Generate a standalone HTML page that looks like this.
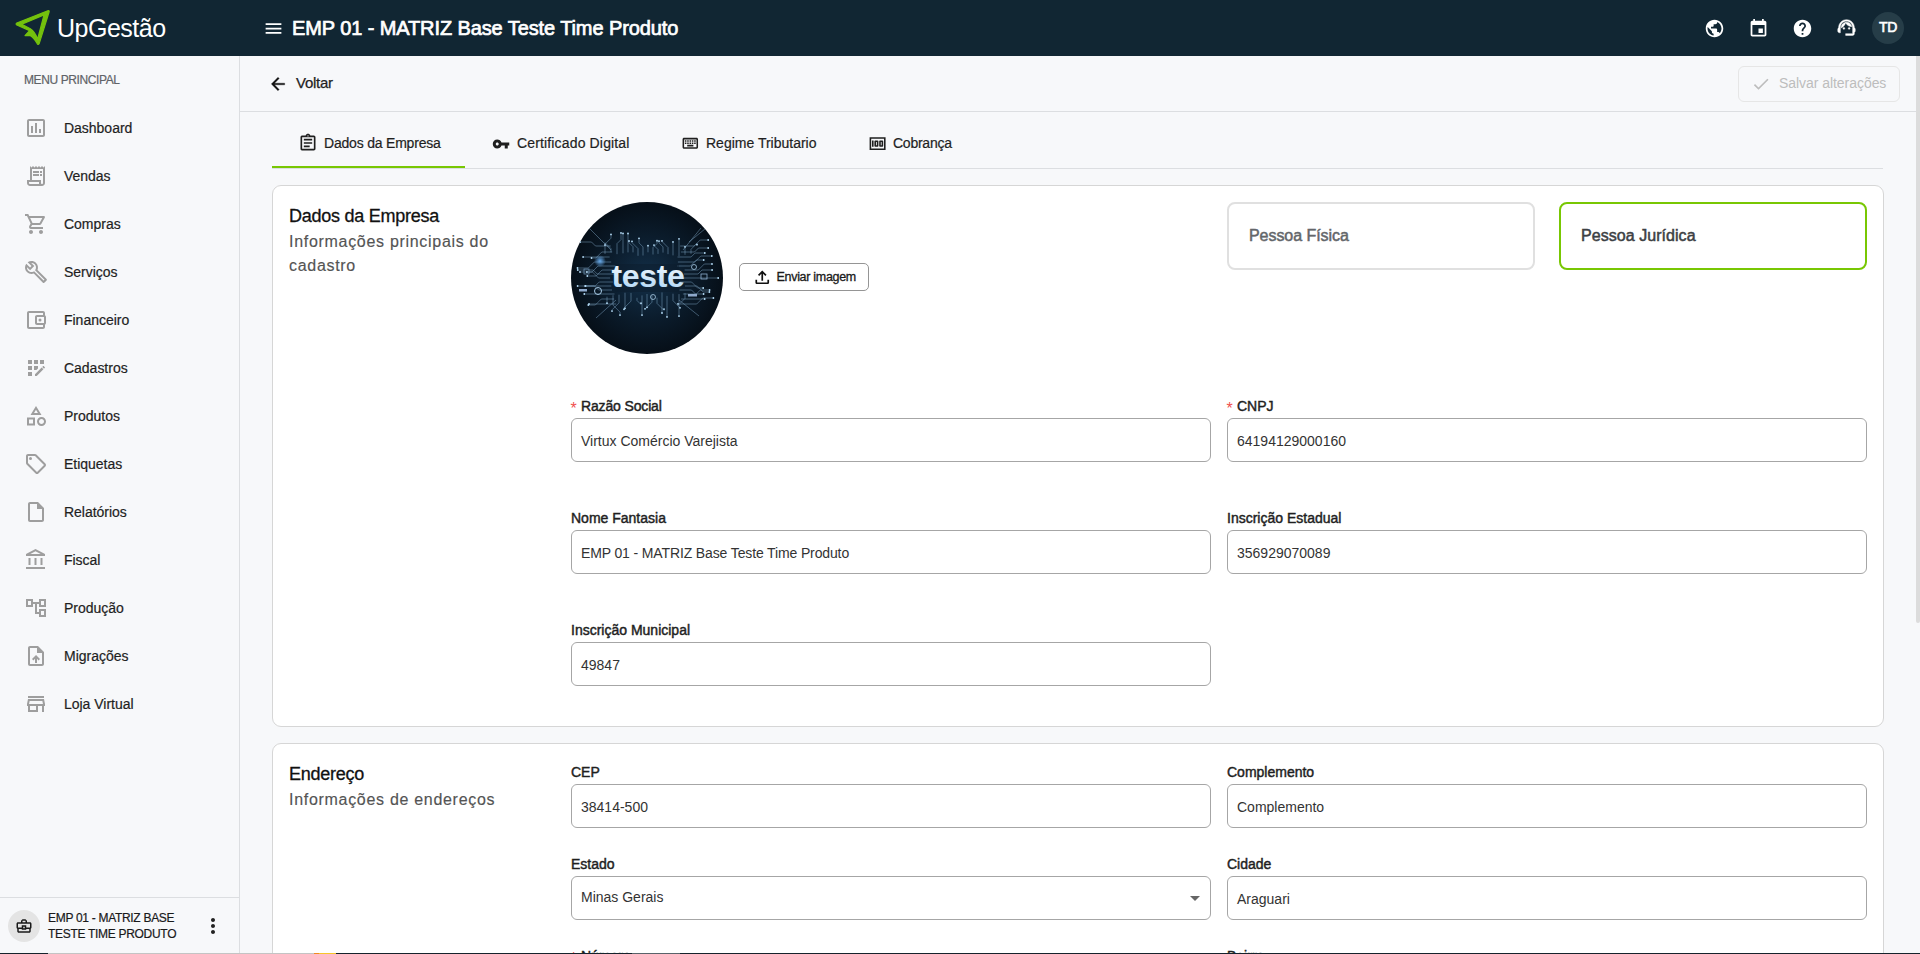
<!DOCTYPE html>
<html><head><meta charset="utf-8">
<style>
*{box-sizing:border-box;margin:0;padding:0}
html,body{width:1920px;height:954px;overflow:hidden;background:#f7f8fa;font-family:"Liberation Sans",sans-serif;color:#1c1c1c;position:relative}
.t{position:absolute;white-space:nowrap}
</style></head><body>
<div class="t" style="left:0px;top:0px;width:1920px;height:56px;background:#112633"></div>
<svg class="t" style="left:0;top:0" width="60" height="56" viewBox="0 0 60 56">
<path fill-rule="evenodd" fill="#74c10d" stroke="#74c10d" stroke-width="1.2" stroke-linejoin="round" d="M48.4 10.6 Q49.6 10.6 49 12.2 L39.2 43.6 Q38.5 45.2 37.3 43.8 Q34 37.5 30.4 35.6 L25 35.6 L29.6 30.6 L16.8 25 Q15.4 24 16.8 23 Z M44 14.9 L21.8 24.3 L30.3 28.7 Q34.9 31.6 37.7 39 Z"/>
</svg>
<div class="t" style="left:57px;top:12.84px;font-size:25px;line-height:31px;color:#fff;font-weight:normal;letter-spacing:-0.5px;">UpGestão</div>
<svg class="t" style="left:263px;top:17.5px;" width="21" height="21" viewBox="0 0 24 24" fill="#fff"><path d="M3 18h18v-2H3v2zm0-5h18v-2H3v2zm0-7v2h18V6H3z"/></svg>
<div class="t" style="left:292px;top:15.77px;font-size:20px;line-height:25px;color:#fff;font-weight:normal;letter-spacing:-0.1px;-webkit-text-stroke:0.7px #fff">EMP 01 - MATRIZ Base Teste Time Produto</div>
<svg class="t" style="left:1703.5px;top:17.5px;" width="21" height="21" viewBox="0 0 24 24" fill="#fff"><path d="M12 2C6.48 2 2 6.48 2 12s4.48 10 10 10 10-4.48 10-10S17.52 2 12 2zm-1 17.93c-3.95-.49-7-3.85-7-7.93 0-.62.08-1.21.21-1.79L9 15v1c0 1.1.9 2 2 2v1.93zm6.9-2.54c-.26-.81-1-1.39-1.9-1.39h-1v-3c0-.55-.45-1-1-1H8v-2h2c.55 0 1-.45 1-1V7h2c1.1 0 2-.9 2-2v-.41c2.93 1.19 5 4.06 5 7.41 0 2.08-.8 3.97-2.1 5.39z"/></svg>
<svg class="t" style="left:1747.5px;top:17.5px;" width="21" height="21" viewBox="0 0 24 24" fill="#fff"><path d="M17 12h-5v5h5v-5zM16 1v2H8V1H6v2H5c-1.11 0-1.99.9-1.99 2L3 19c0 1.1.89 2 2 2h14c1.1 0 2-.9 2-2V5c0-1.1-.9-2-2-2h-1V1h-2zm3 18H5V8h14v11z"/></svg>
<svg class="t" style="left:1791.5px;top:17.5px;" width="21" height="21" viewBox="0 0 24 24" fill="#fff"><path d="M12 2C6.48 2 2 6.48 2 12s4.48 10 10 10 10-4.48 10-10S17.52 2 12 2zm1 17h-2v-2h2v2zm2.07-7.75l-.9.92C13.45 12.9 13 13.5 13 15h-2v-.5c0-1.1.45-2.1 1.17-2.83l1.24-1.26c.37-.36.59-.86.59-1.41 0-1.1-.9-2-2-2s-2 .9-2 2H8c0-2.21 1.79-4 4-4s4 1.79 4 4c0 .88-.36 1.68-.93 2.25z"/></svg>
<svg class="t" style="left:1835.5px;top:16.8px;stroke:#fff;stroke-width:0.5px" width="21" height="21" viewBox="0 0 24 24" fill="#fff"><path d="M21 12.22C21 6.73 16.74 3 12 3c-4.69 0-9 3.65-9 9.28-.6.34-1 .98-1 1.72v2c0 1.1.9 2 2 2h1v-6.1c0-3.87 3.13-7 7-7s7 3.13 7 7V19h-8v2h8c1.1 0 2-.9 2-2v-1.22c.59-.31 1-.92 1-1.64v-2.3c0-.7-.41-1.31-1-1.62z"/><circle cx="9" cy="13" r="1"/><circle cx="15" cy="13" r="1"/><path d="M18 11.03C17.52 8.18 15.04 6 12.05 6c-3.03 0-6.29 2.51-6.03 6.45 2.47-1.01 4.33-3.21 4.86-5.89 1.31 2.63 4 4.44 7.12 4.47z"/></svg>
<div class="t" style="left:1872px;top:12px;width:32px;height:32px;border-radius:50%;background:#263d48;color:#fff;font-size:14px;font-weight:normal;-webkit-text-stroke:0.6px #fff;letter-spacing:-0.3px;text-align:center;line-height:30px">TD</div>
<div class="t" style="left:0px;top:56px;width:240px;height:898px;background:#f7f8fa"></div>
<div class="t" style="left:239px;top:56px;width:1px;height:898px;background:#dcdee1"></div>
<div class="t" style="left:24px;top:72.84px;font-size:12px;line-height:15px;color:#5f6368;font-weight:normal;letter-spacing:-0.4px;-webkit-text-stroke:0.2px #5f6368">MENU PRINCIPAL</div>
<svg class="t" style="left:24px;top:116px;" width="24" height="24" viewBox="0 0 24 24" fill="#9e9e9e"><path d="M9 17H7v-7h2v7zm4 0h-2V7h2v10zm4 0h-2v-4h2v4zm2 2H5V5h14v14zm0-16H5c-1.1 0-2 .9-2 2v14c0 1.1.9 2 2 2h14c1.1 0 2-.9 2-2V5c0-1.1-.9-2-2-2z"/></svg>
<div class="t" style="left:64px;top:119.15px;font-size:14px;line-height:18px;color:#1f1f1f;font-weight:normal;letter-spacing:-0.02px;-webkit-text-stroke:0.2px #1f1f1f">Dashboard</div>
<svg class="t" style="left:24px;top:164px;" width="24" height="24" viewBox="0 0 24 24" fill="#9e9e9e"><path d="M19.5 3.5L18 2l-1.5 1.5L15 2l-1.5 1.5L12 2l-1.5 1.5L9 2 7.5 3.5 6 2v14H3v3c0 1.66 1.34 3 3 3h12c1.66 0 3-1.34 3-3V2l-1.5 1.5zM15 20H6c-.55 0-1-.45-1-1v-1h10v2zm4-1c0 .55-.45 1-1 1s-1-.45-1-1v-3H8V5h11v14z"/><path d="M9 7h6v2H9zm7 0h2v2h-2zm-7 3h6v2H9zm7 0h2v2h-2z"/></svg>
<div class="t" style="left:64px;top:167.15px;font-size:14px;line-height:18px;color:#1f1f1f;font-weight:normal;letter-spacing:-0.02px;-webkit-text-stroke:0.2px #1f1f1f">Vendas</div>
<svg class="t" style="left:24px;top:212px;" width="24" height="24" viewBox="0 0 24 24" fill="#9e9e9e"><path d="M15.55 13c.75 0 1.41-.41 1.75-1.03l3.58-6.49c.37-.66-.11-1.48-.87-1.48H5.21l-.94-2H1v2h2l3.6 7.59-1.35 2.44C4.52 15.37 5.48 17 7 17h12v-2H7l1.1-2h7.45zM6.16 6h12.15l-2.76 5H8.53L6.16 6zM7 18c-1.1 0-1.99.9-1.99 2S5.9 22 7 22s2-.9 2-2-.9-2-2-2zm10 0c-1.1 0-1.99.9-1.99 2s.89 2 1.99 2 2-.9 2-2-.9-2-2-2z"/></svg>
<div class="t" style="left:64px;top:215.15px;font-size:14px;line-height:18px;color:#1f1f1f;font-weight:normal;letter-spacing:-0.02px;-webkit-text-stroke:0.2px #1f1f1f">Compras</div>
<svg class="t" style="left:24px;top:260px;" width="24" height="24" viewBox="0 0 24 24" fill="#9e9e9e"><path d="M22.61 18.99l-9.08-9.08c.93-2.34.45-5.1-1.44-7C9.79.61 6.21.4 3.66 2.26L7.5 6.11 6.08 7.52 2.25 3.69C.39 6.23.6 9.82 2.9 12.11c1.86 1.86 4.57 2.35 6.89 1.48l9.11 9.11c.39.39 1.02.39 1.41 0l2.3-2.3c.4-.38.4-1.01 0-1.41zm-3 1.6l-9.46-9.46c-.61.45-1.29.72-2 .82-1.36.2-2.79-.21-3.83-1.25C3.37 9.76 2.93 8.5 3 7.26l3.09 3.09 4.24-4.24-3.09-3.09c1.24-.07 2.49.37 3.44 1.31 1.08 1.08 1.49 2.57 1.24 3.96-.12.71-.42 1.37-.88 1.96l9.45 9.45-.88.89z"/></svg>
<div class="t" style="left:64px;top:263.15px;font-size:14px;line-height:18px;color:#1f1f1f;font-weight:normal;letter-spacing:-0.02px;-webkit-text-stroke:0.2px #1f1f1f">Serviços</div>
<svg class="t" style="left:24px;top:308px;" width="24" height="24" viewBox="0 0 24 24" fill="#9e9e9e"><path d="M21 7.28V5c0-1.1-.9-2-2-2H5c-1.11 0-2 .9-2 2v14c0 1.1.89 2 2 2h14c1.1 0 2-.9 2-2v-2.28c.59-.35 1-.98 1-1.72V9c0-.74-.41-1.37-1-1.72zM20 9v6h-7V9h7zM5 19V5h14v2h-6c-1.1 0-2 .9-2 2v6c0 1.1.9 2 2 2h6v2H5z"/><circle cx="16" cy="12" r="1.5"/></svg>
<div class="t" style="left:64px;top:311.15px;font-size:14px;line-height:18px;color:#1f1f1f;font-weight:normal;letter-spacing:-0.02px;-webkit-text-stroke:0.2px #1f1f1f">Financeiro</div>
<svg class="t" style="left:24px;top:356px;" width="24" height="24" viewBox="0 0 24 24" fill="#9e9e9e"><path d="M10 4h4v4h-4zM4 16h4v4H4zm0-6h4v4H4zm0-6h4v4H4zm10 8.42V10h-4v4h2.42zm6.88-1.13l-1.17-1.17c-.16-.16-.42-.16-.58 0l-.88.88L20 12.75l.88-.88c.16-.16.16-.42 0-.58zM11 18.25V20h1.75l6.67-6.67-1.75-1.75zM16 4h4v4h-4z"/></svg>
<div class="t" style="left:64px;top:359.15px;font-size:14px;line-height:18px;color:#1f1f1f;font-weight:normal;letter-spacing:-0.02px;-webkit-text-stroke:0.2px #1f1f1f">Cadastros</div>
<svg class="t" style="left:24px;top:404px;" width="24" height="24" viewBox="0 0 24 24" fill="#9e9e9e"><path d="M12 2l-5.5 9h11L12 2zm0 3.84L13.93 9h-3.87L12 5.84zM17.5 13c-2.49 0-4.5 2.01-4.5 4.5s2.01 4.5 4.5 4.5 4.5-2.01 4.5-4.5-2.01-4.5-4.5-4.5zm0 7c-1.38 0-2.5-1.12-2.5-2.5s1.12-2.5 2.5-2.5 2.5 1.12 2.5 2.5-1.12 2.5-2.5 2.5zM3 21.5h8v-8H3v8zm2-6h4v4H5v-4z"/></svg>
<div class="t" style="left:64px;top:407.15px;font-size:14px;line-height:18px;color:#1f1f1f;font-weight:normal;letter-spacing:-0.02px;-webkit-text-stroke:0.2px #1f1f1f">Produtos</div>
<svg class="t" style="left:24px;top:452px;" width="24" height="24" viewBox="0 0 24 24" fill="#9e9e9e"><path d="M21.41 11.58l-9-9C12.05 2.22 11.55 2 11 2H4c-1.1 0-2 .9-2 2v7c0 .55.22 1.05.59 1.42l9 9c.36.36.86.58 1.41.58s1.05-.22 1.41-.59l7-7c.37-.36.59-.86.59-1.41s-.23-1.06-.59-1.42zM13 20.01L4 11V4h7v-.01l9 9-7 7.02z"/><circle cx="6.5" cy="6.5" r="1.5"/></svg>
<div class="t" style="left:64px;top:455.15px;font-size:14px;line-height:18px;color:#1f1f1f;font-weight:normal;letter-spacing:-0.02px;-webkit-text-stroke:0.2px #1f1f1f">Etiquetas</div>
<svg class="t" style="left:24px;top:500px;" width="24" height="24" viewBox="0 0 24 24" fill="#9e9e9e"><path d="M14 2H6c-1.1 0-1.99.9-1.99 2L4 20c0 1.1.89 2 1.99 2H18c1.1 0 2-.9 2-2V8l-6-6zM6 20V4h7v5h5v11H6z"/></svg>
<div class="t" style="left:64px;top:503.15px;font-size:14px;line-height:18px;color:#1f1f1f;font-weight:normal;letter-spacing:-0.02px;-webkit-text-stroke:0.2px #1f1f1f">Relatórios</div>
<svg class="t" style="left:24px;top:548px;" width="24" height="24" viewBox="0 0 24 24" fill="#9e9e9e"><path d="M6.5 10h-2v7h2v-7zm6 0h-2v7h2v-7zm8.5 9H2v2h19v-2zm-2.5-9h-2v7h2v-7zm-7-6.74L16.71 6H6.29l5.21-2.74m0-2.26L2 6v2h19V6l-9.5-5z"/></svg>
<div class="t" style="left:64px;top:551.15px;font-size:14px;line-height:18px;color:#1f1f1f;font-weight:normal;letter-spacing:-0.02px;-webkit-text-stroke:0.2px #1f1f1f">Fiscal</div>
<svg class="t" style="left:24px;top:596px;" width="24" height="24" viewBox="0 0 24 24" fill="#9e9e9e"><path d="M22 11V3h-7v3H9V3H2v8h7V8h2v10h4v3h7v-8h-7v3h-2V8h2v3h7zM7 9H4V5h3v4zm10 6h3v4h-3v-4zm0-10h3v4h-3V5z"/></svg>
<div class="t" style="left:64px;top:599.15px;font-size:14px;line-height:18px;color:#1f1f1f;font-weight:normal;letter-spacing:-0.02px;-webkit-text-stroke:0.2px #1f1f1f">Produção</div>
<svg class="t" style="left:24px;top:644px;" width="24" height="24" viewBox="0 0 24 24" fill="#9e9e9e"><path d="M14 2H6c-1.1 0-1.99.9-1.99 2L4 20c0 1.1.89 2 1.99 2H18c1.1 0 2-.9 2-2V8l-6-6zm4 18H6V4h7v5h5v11zM8 15.01l1.41 1.41L11 14.84V19h2v-4.16l1.59 1.59L16 15.01 12.01 11z"/></svg>
<div class="t" style="left:64px;top:647.15px;font-size:14px;line-height:18px;color:#1f1f1f;font-weight:normal;letter-spacing:-0.02px;-webkit-text-stroke:0.2px #1f1f1f">Migrações</div>
<svg class="t" style="left:24px;top:692px;" width="24" height="24" viewBox="0 0 24 24" fill="#9e9e9e"><path d="M18.36 9l.6 3H5.04l.6-3h12.72M20 4H4v2h16V4zm0 3H4l-1 5v2h1v6h10v-6h4v6h2v-6h1v-2l-1-5zM6 18v-4h6v4H6z"/></svg>
<div class="t" style="left:64px;top:695.15px;font-size:14px;line-height:18px;color:#1f1f1f;font-weight:normal;letter-spacing:-0.02px;-webkit-text-stroke:0.2px #1f1f1f">Loja Virtual</div>
<div class="t" style="left:0px;top:897px;width:239px;height:1px;background:#dcdee1"></div>
<div class="t" style="left:8px;top:910px;width:32px;height:32px;border-radius:50%;background:#e4e4e4"></div>
<svg class="t" style="left:15px;top:917px;" width="18" height="18" viewBox="0 0 24 24" fill="#1a1a1a"><path d="M20 7h-4V5l-2-2h-4L8 5v2H4c-1.1 0-2 .9-2 2v5c0 .75.4 1.38 1 1.73V19c0 1.11.89 2 2 2h14c1.11 0 2-.89 2-2v-3.28c.59-.35 1-.99 1-1.72V9c0-1.1-.9-2-2-2zM10 5h4v2h-4V5zM4 9h16v5h-5v-3H9v3H4V9zm9 6h-2v-2h2v2zm6 4H5v-3h4v1h6v-1h4v3z"/></svg>
<div class="t" style="left:48px;top:910.74px;font-size:12px;line-height:15px;color:#1a1a1a;font-weight:normal;letter-spacing:-0.3px;-webkit-text-stroke:0.2px #1a1a1a">EMP 01 - MATRIZ BASE</div>
<div class="t" style="left:48px;top:926.74px;font-size:12px;line-height:15px;color:#1a1a1a;font-weight:normal;letter-spacing:-0.3px;-webkit-text-stroke:0.2px #1a1a1a">TESTE TIME PRODUTO</div>
<svg class="t" style="left:201px;top:914px;" width="24" height="24" viewBox="0 0 24 24" fill="#222"><path d="M12 8c1.1 0 2-.9 2-2s-.9-2-2-2-2 .9-2 2 .9 2 2 2zm0 2c-1.1 0-2 .9-2 2s.9 2 2 2 2-.9 2-2-.9-2-2-2zm0 6c-1.1 0-2 .9-2 2s.9 2 2 2 2-.9 2-2-.9-2-2-2z"/></svg>
<div class="t" style="left:240px;top:56px;width:1676px;height:898px;background:#f7f8fa"></div>
<div class="t" style="left:240px;top:111px;width:1676px;height:1px;background:#dcdee1"></div>
<svg class="t" style="left:268px;top:74px;stroke:#111;stroke-width:0.4px" width="20" height="20" viewBox="0 0 24 24" fill="#111"><path d="M20 11H7.83l5.59-5.59L12 4l-8 8 8 8 1.41-1.41L7.83 13H20v-2z"/></svg>
<div class="t" style="left:296px;top:72.80px;font-size:15px;line-height:19px;color:#1f1f1f;font-weight:normal;letter-spacing:-0.25px;-webkit-text-stroke:0.25px #1f1f1f">Voltar</div>
<div class="t" style="left:1738px;top:66px;width:162px;height:36px;border:1px solid #e6e6e6;border-radius:6px"></div>
<svg class="t" style="left:1751px;top:74px;" width="20" height="20" viewBox="0 0 24 24" fill="#bdbdbd"><path d="M9 16.17L4.83 12l-1.42 1.41L9 19 21 7l-1.41-1.41z"/></svg>
<div class="t" style="left:1779px;top:74.45px;font-size:14px;line-height:18px;color:#bdbdbd;font-weight:normal;letter-spacing:-0.05px;">Salvar alterações</div>
<div class="t" style="left:1916px;top:56px;width:4px;height:567px;background:#dcdcdc;border-radius:0 0 2px 2px"></div>
<div class="t" style="left:272px;top:168px;width:1611px;height:1px;background:#dcdee1"></div>
<div class="t" style="left:272px;top:166px;width:193px;height:2px;background:#78c703"></div>
<svg class="t" style="left:298px;top:133px;" width="20" height="20" viewBox="0 0 24 24" fill="#1f1f1f"><path d="M7 15h7v2H7zm0-4h10v2H7zm0-4h10v2H7zm12-4h-4.18C14.4 1.84 13.3 1 12 1c-1.3 0-2.4.84-2.82 2H5c-.14 0-.27.01-.4.04-.39.08-.74.28-1.01.55-.18.18-.33.4-.43.64-.1.23-.16.49-.16.77v14c0 .27.06.54.16.78s.25.45.43.64c.27.27.62.47 1.01.55.13.02.26.03.4.03h14c1.1 0 2-.9 2-2V5c0-1.1-.9-2-2-2zm-7-.25c.41 0 .75.34.75.75s-.34.75-.75.75-.75-.34-.75-.75.34-.75.75-.75zM19 19H5V5h14v14z"/></svg>
<div class="t" style="left:324px;top:134.15px;font-size:14px;line-height:18px;color:#1f1f1f;font-weight:normal;letter-spacing:-0.2px;-webkit-text-stroke:0.2px #1f1f1f">Dados da Empresa</div>
<svg class="t" style="left:492.2px;top:134.5px;" width="18" height="18" viewBox="0 0 24 24" fill="#1f1f1f"><path d="M12.65 10C11.83 7.67 9.61 6 7 6c-3.31 0-6 2.69-6 6s2.69 6 6 6c2.61 0 4.83-1.67 5.65-4H17v4h4v-4h2v-4H12.65zM7 14c-1.1 0-2-.9-2-2s.9-2 2-2 2 .9 2 2-.9 2-2 2z"/></svg>
<div class="t" style="left:517px;top:134.15px;font-size:14px;line-height:18px;color:#1f1f1f;font-weight:normal;letter-spacing:0.15px;-webkit-text-stroke:0.2px #1f1f1f">Certificado Digital</div>
<svg class="t" style="left:680.5px;top:134.1px;" width="18.6" height="18.6" viewBox="0 0 24 24" fill="#1f1f1f"><path d="M20 7v10H4V7h16m0-2H4c-1.1 0-1.99.9-1.99 2L2 17c0 1.1.9 2 2 2h16c1.1 0 2-.9 2-2V7c0-1.1-.9-2-2-2zm-9 3h2v2h-2zm0 3h2v2h-2zM8 8h2v2H8zm0 3h2v2H8zm-3 0h2v2H5zm0-3h2v2H5zm3 6h8v2H8zm6-3h2v2h-2zm0-3h2v2h-2zm3 3h2v2h-2zm0-3h2v2h-2z"/></svg>
<div class="t" style="left:706px;top:134.15px;font-size:14px;line-height:18px;color:#1f1f1f;font-weight:normal;letter-spacing:0.0px;-webkit-text-stroke:0.2px #1f1f1f">Regime Tributario</div>
<svg class="t" style="left:867.9px;top:133.8px;" width="19.2" height="19.2" viewBox="0 0 24 24" fill="#1f1f1f"><path d="M5 8h2v8H5zm7 0H9c-.55 0-1 .45-1 1v6c0 .55.45 1 1 1h3c.55 0 1-.45 1-1V9c0-.55-.45-1-1-1zm-1 6h-1v-4h1v4zm7-6h-3c-.55 0-1 .45-1 1v6c0 .55.45 1 1 1h3c.55 0 1-.45 1-1V9c0-.55-.45-1-1-1zm-1 6h-1v-4h1v4z"/><path d="M2 4v16h20V4H2zm2 14V6h16v12H4z"/></svg>
<div class="t" style="left:893px;top:134.15px;font-size:14px;line-height:18px;color:#1f1f1f;font-weight:normal;letter-spacing:-0.25px;-webkit-text-stroke:0.2px #1f1f1f">Cobrança</div>
<div class="t" style="left:272px;top:185px;width:1612px;height:542px;background:#fff;border:1px solid #d6d6d6;border-radius:9px"></div>
<div class="t" style="left:289px;top:204.76px;font-size:18px;line-height:22px;color:#111;font-weight:normal;letter-spacing:-0.25px;-webkit-text-stroke:0.3px #111">Dados da Empresa</div>
<div class="t" style="left:289px;top:231.76px;font-size:16px;line-height:20px;color:#545454;font-weight:normal;letter-spacing:0.7px;-webkit-text-stroke:0.15px #545454">Informações principais do</div>
<div class="t" style="left:289px;top:255.76px;font-size:16px;line-height:20px;color:#545454;font-weight:normal;letter-spacing:0.7px;-webkit-text-stroke:0.15px #545454">cadastro</div>
<svg class="t" style="left:571px;top:202px" width="152" height="152" viewBox="0 0 152 152">
<defs><radialGradient id="ag" cx="50%" cy="50%" r="50%"><stop offset="0" stop-color="#13304a"/><stop offset="0.55" stop-color="#0b1c2c"/><stop offset="1" stop-color="#060f18"/></radialGradient>
<linearGradient id="tg" x1="0" y1="0" x2="0" y2="1"><stop offset="0" stop-color="#ffffff"/><stop offset="1" stop-color="#a9d3f5"/></linearGradient>
<radialGradient id="glow" cx="50%" cy="50%" r="50%"><stop offset="0" stop-color="#6fb8ff" stop-opacity="0.9"/><stop offset="1" stop-color="#6fb8ff" stop-opacity="0"/></radialGradient>
<clipPath id="cc"><circle cx="76" cy="76" r="76"/></clipPath></defs>
<circle cx="76" cy="76" r="76" fill="url(#ag)"/>
<g clip-path="url(#cc)">
<g stroke="#8ab4d4" stroke-width="0.55" fill="none" opacity="0.8"><path d="M34 51.9V42.2l6 -6V32.4 M40 50.3V46.7l-6 -6V43.1 M46 52.2V41.6l4 -4V30.9 M52 51.3V31.4 M57 50.4V31.5 M62 50.4V44.7l-4 -4V39.0 M67 53.8V46.6l-6 -6V39.3 M72 53.5V44.9l-4 -4V36.3 M77 50.3V43.7 M82 52.5V45.6l4 -4V38.7 M87 51.9V47.5l-4 -4V43.1 M92 50.6V44.9l-4 -4V39.1 M97 52.2V45.5l-6 -6V38.8 M102 53.4V39.9 M108 54.1V36.8 M114 52.8V44.8 M120 51.8V47.3l6 -6V42.7 M36 94.7V101.2 M42 93.2V103.1l7 7V113.1 M48 92.7V100.9l-7 7V109.1 M54 90.7V106.3 M60 90.9V99.1l-7 7V107.3 M66 95.8V98.5l4 4V101.2 M71 93.4V113.1 M76 92.0V105.3 M81 93.5V100.2l-7 7V106.8 M86 95.7V101.4l7 7V107.1 M91 90.4V111.0 M96 93.9V114.9 M102 91.7V98.7l7 7V105.8 M108 92.1V114.1 M114 91.0V96.4l-7 7V101.8 M39.7 44H24.5l-4 -4H9.2 M41.2 50H30.8l-6 6H20.5 M38.6 55H12.1 M40.2 60H23.3l-6 6H6.5 M44.9 64H27.0l-6 6H9.0 M45.9 68H31.1l-6 6H16.3 M45.7 72H26.2l-4 -4H6.7 M39.2 76H27.5l-6 -6H15.9 M41.9 80H28.2l-4 4H14.6 M40.3 84H6.6 M41.0 88H27.6l-4 -4H14.2 M43.5 92H13.3 M43.2 97H30.3l-6 6H17.3 M45.2 102H18.0 M109.1 44H123.2l6 -6H137.2 M109.9 50H123.5l4 -4H137.2 M106.5 55H120.1l4 -4H133.8 M106.9 60H123.8l6 -6H140.8 M106.0 64H119.4l6 -6H132.7 M113.6 68H127.3l6 -6H141.0 M113.0 72H127.0l4 -4H141.1 M111.1 76H147.2 M108.9 80H120.6l6 6H132.2 M113.9 84H126.2l6 6H138.4 M108.5 88H120.5l4 4H132.6 M111.9 92H125.3l4 -4H138.6 M110.1 97H133.7 M108.9 102H125.7l6 -6H142.4 M40 48L18 26 M112 48L130 26 M45 98L25 116 M108 98L128 114 M118 40L140 22"/></g>
<g fill="#b5dcf7"><circle cx="40.0" cy="32.4" r="0.9"/><circle cx="34.0" cy="43.1" r="0.9"/><circle cx="50.0" cy="30.9" r="0.9"/><circle cx="52.0" cy="31.4" r="0.9"/><circle cx="57.0" cy="31.5" r="0.9"/><circle cx="58.0" cy="39.0" r="0.9"/><circle cx="61.0" cy="39.3" r="0.9"/><circle cx="68.0" cy="36.3" r="0.9"/><circle cx="77.0" cy="43.7" r="0.9"/><circle cx="86.0" cy="38.7" r="0.9"/><circle cx="83.0" cy="43.1" r="0.9"/><circle cx="88.0" cy="39.1" r="0.9"/><circle cx="91.0" cy="38.8" r="0.9"/><circle cx="102.0" cy="39.9" r="0.9"/><circle cx="108.0" cy="36.8" r="0.9"/><circle cx="114.0" cy="44.8" r="0.9"/><circle cx="126.0" cy="42.7" r="0.9"/><circle cx="36.0" cy="101.2" r="0.9"/><circle cx="49.0" cy="113.1" r="0.9"/><circle cx="41.0" cy="109.1" r="0.9"/><circle cx="54.0" cy="106.3" r="0.9"/><circle cx="53.0" cy="107.3" r="0.9"/><circle cx="70.0" cy="101.2" r="0.9"/><circle cx="71.0" cy="113.1" r="0.9"/><circle cx="76.0" cy="105.3" r="0.9"/><circle cx="74.0" cy="106.8" r="0.9"/><circle cx="93.0" cy="107.1" r="0.9"/><circle cx="91.0" cy="111.0" r="0.9"/><circle cx="96.0" cy="114.9" r="0.9"/><circle cx="109.0" cy="105.8" r="0.9"/><circle cx="108.0" cy="114.1" r="0.9"/><circle cx="107.0" cy="101.8" r="0.9"/><circle cx="9.2" cy="40.0" r="0.9"/><circle cx="20.5" cy="56.0" r="0.9"/><circle cx="12.1" cy="55.0" r="0.9"/><circle cx="6.5" cy="66.0" r="0.9"/><circle cx="9.0" cy="70.0" r="0.9"/><circle cx="16.3" cy="74.0" r="0.9"/><circle cx="6.7" cy="68.0" r="0.9"/><circle cx="15.9" cy="70.0" r="0.9"/><circle cx="14.6" cy="84.0" r="0.9"/><circle cx="6.6" cy="84.0" r="0.9"/><circle cx="14.2" cy="84.0" r="0.9"/><circle cx="13.3" cy="92.0" r="0.9"/><circle cx="17.3" cy="103.0" r="0.9"/><circle cx="18.0" cy="102.0" r="0.9"/><circle cx="137.2" cy="38.0" r="0.9"/><circle cx="137.2" cy="46.0" r="0.9"/><circle cx="133.8" cy="51.0" r="0.9"/><circle cx="140.8" cy="54.0" r="0.9"/><circle cx="132.7" cy="58.0" r="0.9"/><circle cx="141.0" cy="62.0" r="0.9"/><circle cx="141.1" cy="68.0" r="0.9"/><circle cx="147.2" cy="76.0" r="0.9"/><circle cx="132.2" cy="86.0" r="0.9"/><circle cx="138.4" cy="90.0" r="0.9"/><circle cx="132.6" cy="92.0" r="0.9"/><circle cx="138.6" cy="88.0" r="0.9"/><circle cx="133.7" cy="97.0" r="0.9"/><circle cx="142.4" cy="96.0" r="0.9"/></g>
<circle cx="29" cy="59" r="6" fill="url(#glow)"/>
<rect x="13" y="67" width="5" height="5" fill="none" stroke="#6b8fb0" stroke-width="0.8"/>
<rect x="130" y="72" width="6" height="5" fill="none" stroke="#8fb0d0" stroke-width="0.8"/>
<rect x="8" y="87" width="8" height="2.5" fill="#8fa9cc"/>
<rect x="117" y="92" width="9" height="2.5" fill="#8fa9cc"/>
<circle cx="27" cy="89" r="3.5" fill="none" stroke="#a8cbe6" stroke-width="1"/>
<circle cx="82" cy="95" r="2.5" fill="none" stroke="#a8cbe6" stroke-width="0.8"/>
<circle cx="123" cy="65" r="2.5" fill="none" stroke="#a8cbe6" stroke-width="0.8"/>
</g>
<rect x="44" y="62" width="64" height="28" fill="#0b1c2c" opacity="0.5"/>
<text x="77" y="85" text-anchor="middle" font-family="Liberation Sans" font-weight="bold" font-size="32" fill="url(#tg)" letter-spacing="-0.3">teste</text>
</svg>
<div class="t" style="left:739px;top:263px;width:130px;height:28px;border:1px solid #959595;border-radius:5px;background:#fff"></div>
<svg class="t" style="left:752px;top:267px;" width="20.5" height="20.5" viewBox="0 0 24 24" fill="#111"><path d="M18 15v3H6v-3H4v3c0 1.1.9 2 2 2h12c1.1 0 2-.9 2-2v-3h-2zM7 9l1.41 1.41L11 7.83V16h2V7.83l2.59 2.58L17 9l-5-5-5 5z"/></svg>
<div class="t" style="left:776.5px;top:269.37px;font-size:12.5px;line-height:16px;color:#1a1a1a;font-weight:normal;letter-spacing:-0.3px;-webkit-text-stroke:0.3px #1a1a1a">Enviar imagem</div>
<div class="t" style="left:1227px;top:202px;width:308px;height:68px;border:2px solid #e0e0e0;border-radius:8px;background:#fff"></div>
<div class="t" style="left:1249px;top:226.46px;font-size:16px;line-height:20px;color:#63666a;font-weight:normal;letter-spacing:-0.05px;-webkit-text-stroke:0.5px #63666a">Pessoa Física</div>
<div class="t" style="left:1559px;top:202px;width:308px;height:68px;border:2px solid #78c703;border-radius:8px;background:#fff"></div>
<div class="t" style="left:1581px;top:226.46px;font-size:16px;line-height:20px;color:#3c4043;font-weight:normal;letter-spacing:0.05px;-webkit-text-stroke:0.5px #3c4043">Pessoa Jurídica</div>
<div class="t" style="left:570.5px;top:398.96px;font-size:16px;line-height:20px;color:#f0504f;font-weight:normal;letter-spacing:0px;">*</div>
<div class="t" style="left:581px;top:396.85px;font-size:14px;line-height:18px;color:#1f1f1f;font-weight:normal;letter-spacing:-0.15px;-webkit-text-stroke:0.45px #1f1f1f">Razão Social</div>
<div class="t" style="left:571px;top:418px;width:640px;height:44px;border:1px solid #a6a6a6;border-radius:6px;background:#fff"></div>
<div class="t" style="left:581px;top:431.65px;font-size:14px;line-height:18px;color:#333;font-weight:normal;letter-spacing:0px;">Virtux Comércio Varejista</div>
<div class="t" style="left:1226.5px;top:398.96px;font-size:16px;line-height:20px;color:#f0504f;font-weight:normal;letter-spacing:0px;">*</div>
<div class="t" style="left:1237px;top:396.85px;font-size:14px;line-height:18px;color:#1f1f1f;font-weight:normal;letter-spacing:0px;-webkit-text-stroke:0.45px #1f1f1f">CNPJ</div>
<div class="t" style="left:1227px;top:418px;width:640px;height:44px;border:1px solid #a6a6a6;border-radius:6px;background:#fff"></div>
<div class="t" style="left:1237px;top:431.65px;font-size:14px;line-height:18px;color:#333;font-weight:normal;letter-spacing:0px;">64194129000160</div>
<div class="t" style="left:571px;top:508.85px;font-size:14px;line-height:18px;color:#1f1f1f;font-weight:normal;letter-spacing:0px;-webkit-text-stroke:0.45px #1f1f1f">Nome Fantasia</div>
<div class="t" style="left:571px;top:530px;width:640px;height:44px;border:1px solid #a6a6a6;border-radius:6px;background:#fff"></div>
<div class="t" style="left:581px;top:543.65px;font-size:14px;line-height:18px;color:#333;font-weight:normal;letter-spacing:-0.13px;">EMP 01 - MATRIZ Base Teste Time Produto</div>
<div class="t" style="left:1227px;top:508.85px;font-size:14px;line-height:18px;color:#1f1f1f;font-weight:normal;letter-spacing:0px;-webkit-text-stroke:0.45px #1f1f1f">Inscrição Estadual</div>
<div class="t" style="left:1227px;top:530px;width:640px;height:44px;border:1px solid #a6a6a6;border-radius:6px;background:#fff"></div>
<div class="t" style="left:1237px;top:543.65px;font-size:14px;line-height:18px;color:#333;font-weight:normal;letter-spacing:0px;">356929070089</div>
<div class="t" style="left:571px;top:620.85px;font-size:14px;line-height:18px;color:#1f1f1f;font-weight:normal;letter-spacing:0px;-webkit-text-stroke:0.45px #1f1f1f">Inscrição Municipal</div>
<div class="t" style="left:571px;top:642px;width:640px;height:44px;border:1px solid #a6a6a6;border-radius:6px;background:#fff"></div>
<div class="t" style="left:581px;top:655.65px;font-size:14px;line-height:18px;color:#333;font-weight:normal;letter-spacing:0px;">49847</div>
<div class="t" style="left:272px;top:743px;width:1612px;height:260px;background:#fff;border:1px solid #d6d6d6;border-radius:9px"></div>
<div class="t" style="left:289px;top:763.06px;font-size:18px;line-height:22px;color:#111;font-weight:normal;letter-spacing:-0.25px;-webkit-text-stroke:0.3px #111">Endereço</div>
<div class="t" style="left:289px;top:789.76px;font-size:16px;line-height:20px;color:#545454;font-weight:normal;letter-spacing:0.7px;-webkit-text-stroke:0.15px #545454">Informações de endereços</div>
<div class="t" style="left:571px;top:762.85px;font-size:14px;line-height:18px;color:#1f1f1f;font-weight:normal;letter-spacing:0px;-webkit-text-stroke:0.45px #1f1f1f">CEP</div>
<div class="t" style="left:571px;top:784px;width:640px;height:44px;border:1px solid #a6a6a6;border-radius:6px;background:#fff"></div>
<div class="t" style="left:581px;top:797.65px;font-size:14px;line-height:18px;color:#333;font-weight:normal;letter-spacing:0px;">38414-500</div>
<div class="t" style="left:1227px;top:762.85px;font-size:14px;line-height:18px;color:#1f1f1f;font-weight:normal;letter-spacing:0px;-webkit-text-stroke:0.45px #1f1f1f">Complemento</div>
<div class="t" style="left:1227px;top:784px;width:640px;height:44px;border:1px solid #a6a6a6;border-radius:6px;background:#fff"></div>
<div class="t" style="left:1237px;top:797.65px;font-size:14px;line-height:18px;color:#333;font-weight:normal;letter-spacing:0px;">Complemento</div>
<div class="t" style="left:571px;top:854.85px;font-size:14px;line-height:18px;color:#1f1f1f;font-weight:normal;letter-spacing:0px;-webkit-text-stroke:0.45px #1f1f1f">Estado</div>
<div class="t" style="left:571px;top:876px;width:640px;height:44px;border:1px solid #a6a6a6;border-radius:6px;background:#fff"></div>
<div class="t" style="left:581px;top:888.15px;font-size:14px;line-height:18px;color:#333;font-weight:normal;letter-spacing:0px;">Minas Gerais</div>
<svg class="t" style="left:1183px;top:886px;" width="24" height="24" viewBox="0 0 24 24" fill="#666"><path d="M7 10l5 5 5-5z"/></svg>
<div class="t" style="left:1227px;top:854.85px;font-size:14px;line-height:18px;color:#1f1f1f;font-weight:normal;letter-spacing:0px;-webkit-text-stroke:0.45px #1f1f1f">Cidade</div>
<div class="t" style="left:1227px;top:876px;width:640px;height:44px;border:1px solid #a6a6a6;border-radius:6px;background:#fff"></div>
<div class="t" style="left:1237px;top:889.65px;font-size:14px;line-height:18px;color:#333;font-weight:normal;letter-spacing:0px;">Araguari</div>
<div class="t" style="left:570.5px;top:949.46px;font-size:16px;line-height:20px;color:#f0504f;font-weight:normal;letter-spacing:0px;">*</div>
<div class="t" style="left:581px;top:947.35px;font-size:14px;line-height:18px;color:#1f1f1f;font-weight:normal;letter-spacing:0px;-webkit-text-stroke:0.45px #1f1f1f">Número</div>
<div class="t" style="left:571px;top:968.5px;width:640px;height:44px;border:1px solid #a6a6a6;border-radius:6px;background:#fff"></div>
<div class="t" style="left:581px;top:982.15px;font-size:14px;line-height:18px;color:#333;font-weight:normal;letter-spacing:0px;"></div>
<div class="t" style="left:1227px;top:947.35px;font-size:14px;line-height:18px;color:#1f1f1f;font-weight:normal;letter-spacing:0px;-webkit-text-stroke:0.45px #1f1f1f">Bairro</div>
<div class="t" style="left:1227px;top:968.5px;width:640px;height:44px;border:1px solid #a6a6a6;border-radius:6px;background:#fff"></div>
<div class="t" style="left:1237px;top:982.15px;font-size:14px;line-height:18px;color:#333;font-weight:normal;letter-spacing:0px;"></div>
<div class="t" style="left:0px;top:953px;width:1920px;height:1px;background:#16232c"></div>
<div class="t" style="left:48px;top:953px;width:266px;height:1px;background:#c4c4c4"></div>
<div class="t" style="left:314px;top:953px;width:5px;height:1px;background:#f08a24"></div>
<div class="t" style="left:319px;top:953px;width:17px;height:1px;background:#f7c52b"></div>
<div class="t" style="left:632px;top:953px;width:48px;height:1px;background:#59636a"></div>
</body></html>
